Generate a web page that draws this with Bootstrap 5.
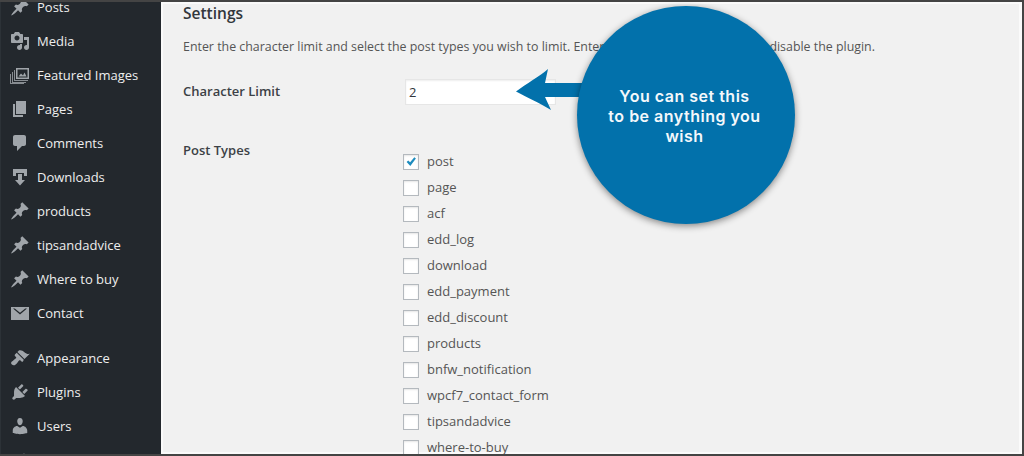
<!DOCTYPE html>
<html lang="en">
<head>
<meta charset="UTF-8">
<title>Settings</title>
<link href="https://cdn.jsdelivr.net/npm/bootstrap@5.3.0/dist/css/bootstrap.min.css" rel="stylesheet">
<style>
    html, body { height: 456px; overflow: hidden; background: #f1f1f1; }
    body { font-family: "Open Sans", "Noto Sans", sans-serif; font-size: 13px; color: #444; }
    .shot { height: 456px; overflow: hidden; border-top: 2px solid #444; border-right: 2px solid #444; border-bottom: 2px solid #444; }
    .side { width: 161px; flex: none; background: #23282d; margin-top: -12px; padding-bottom: 40px; border-left: 1px solid #2c3237; }
    .side-item { height: 34px; flex: none; padding-left: 9px; gap: 7px; color: #eee; font-size: 13px; line-height: 1; }
    .side-item svg { width: 20px; height: 20px; fill: #a0a5aa; flex: none; }
    .side-gap { height: 11px; flex: none; }
    .main-area { padding: 1px 0 0 22px; box-shadow: inset 2px 2px 0 #fafafa, inset -3px -2px 0 #fafafa; }
    .set-title { font-size: 15.5px; font-weight: 600; line-height: 20px; color: #32373c; margin: 0; }
    .set-desc { margin: 14px 0 0; line-height: 20px; font-size: 12.4px; color: #555; white-space: nowrap; }
    .field-label { width: 222px; flex: none; font-size: 13px; font-weight: 600; color: #3c4146; }
    .limit-row { margin-top: 22px; height: 26px; }
    .limit-input { width: 151px; height: 26px; border: 1px solid #e6e6e6; background: #fff; padding: 0 3px; color: #32373c; font-size: 13px; box-shadow: inset 0 1px 2px rgba(0,0,0,.07); }
    .types-row { margin-top: 36px; }
    .check-list { padding-top: 8px; margin-left: -2px; }
    .check-line { height: 26px; gap: 8px; color: #555; font-size: 13px; }
    .check-line .form-check-input { width: 16px; height: 16px; margin: 0; border: 1px solid #b4b9be; border-radius: 0; background-color: #fff; box-shadow: inset 0 1px 2px rgba(0,0,0,.1); }
    .check-line .form-check-input:checked { background-color: #fff; background-image: url("data:image/svg+xml,%3Csvg xmlns='http://www.w3.org/2000/svg' viewBox='0 0 16 16'%3E%3Cpath fill='%231e8cbe' d='M3 8l1.8-1.8L7 8.4 11.8 2.6 13.6 4 7.2 12.6z'/%3E%3C/svg%3E"); }
    .callout-dot { position: absolute; left: 577px; top: 4px; width: 218px; height: 218px; border-radius: 50%; background: #0271ab; box-shadow: 0 2px 7px rgba(0,0,0,.45); color: #f4f8fb; font-family: Inter, sans-serif; font-weight: 600; font-size: 16px; letter-spacing: .5px; line-height: 20px; text-align: center; padding: 80px 3px 0 0; }
    .callout-arrow { position: absolute; left: 510px; top: 62px; width: 80px; height: 52px; fill: #0271ab; }
</style>
</head>
<body>
<div class="shot d-flex position-relative">
    <div class="side d-flex flex-column">
        <div class="side-item d-flex align-items-center"><svg viewBox="0 0 20 20"><path d="M10.44 3.02l1.82-1.82 6.36 6.35-1.83 1.82c-1.05-.68-2.48-.57-3.41.36l-.75.75c-.92.93-1.04 2.35-.35 3.41l-1.83 1.82-2.41-2.41-2.8 2.79c-.42.42-3.38 2.71-3.8 2.29s1.86-3.39 2.28-3.81l2.79-2.79L4.1 9.36l1.83-1.82c1.05.69 2.48.57 3.4-.36l.75-.75c.93-.92 1.05-2.35.36-3.41z"/></svg>Posts</div>
        <div class="side-item d-flex align-items-center"><svg viewBox="0 0 20 20"><path d="M13 11V4c0-.55-.45-1-1-1h-1.67L9 1H5L3.67 3H2c-.55 0-1 .45-1 1v7c0 .55.45 1 1 1h10c.55 0 1-.45 1-1zM7 4.5c1.38 0 2.5 1.12 2.5 2.5S8.38 9.5 7 9.5 4.5 8.38 4.5 7 5.62 4.5 7 4.5zM14 6h5v10.5c0 1.38-1.12 2.5-2.5 2.5S14 17.88 14 16.5s1.12-2.5 2.5-2.5c.17 0 .34.02.5.05V9h-3V6zm-4 8.05V13h2v3.5c0 1.38-1.12 2.5-2.5 2.5S7 17.88 7 16.5 8.12 14 9.5 14c.17 0 .34.02.5.05z"/></svg>Media</div>
        <div class="side-item d-flex align-items-center"><svg viewBox="0 0 20 20"><path fill-rule="evenodd" d="M6 3h13v11H6zM7.500 4.500v8h10v-8zM8.500 11.500l2.500-3 2 2 1.500-3 2 4z"/><path d="M4 5h1v10h13v1H4zM2 7h1v10h13v1H2zM0 9h1v9h13v1H0z" opacity=".8"/></svg>Featured Images</div>
        <div class="side-item d-flex align-items-center"><svg viewBox="0 0 20 20"><path d="M6 15V2h10v13H6zm-1 1h8v2H3V5h2v11z"/></svg>Pages</div>
        <div class="side-item d-flex align-items-center"><svg viewBox="0 0 20 20"><path d="M5 2h9c1.1 0 2 .9 2 2v7c0 1.1-.9 2-2 2h-2l-5 5v-5H5c-1.1 0-2-.9-2-2V4c0-1.1.9-2 2-2z"/></svg>Comments</div>
        <div class="side-item d-flex align-items-center"><svg viewBox="0 0 20 20"><path d="M3 2h14v7h-3V6H6v3H3zM8 7h4v6h3l-5 5.500-5-5.500h3z"/></svg>Downloads</div>
        <div class="side-item d-flex align-items-center"><svg viewBox="0 0 20 20"><path d="M10.44 3.02l1.82-1.82 6.36 6.35-1.83 1.82c-1.05-.68-2.48-.57-3.41.36l-.75.75c-.92.93-1.04 2.35-.35 3.41l-1.83 1.82-2.41-2.41-2.8 2.79c-.42.42-3.38 2.71-3.8 2.29s1.86-3.39 2.28-3.81l2.79-2.79L4.1 9.36l1.83-1.82c1.05.69 2.48.57 3.4-.36l.75-.75c.93-.92 1.05-2.35.36-3.41z"/></svg>products</div>
        <div class="side-item d-flex align-items-center"><svg viewBox="0 0 20 20"><path d="M10.44 3.02l1.82-1.82 6.36 6.35-1.83 1.82c-1.05-.68-2.48-.57-3.41.36l-.75.75c-.92.93-1.04 2.35-.35 3.41l-1.83 1.82-2.41-2.41-2.8 2.79c-.42.42-3.38 2.71-3.8 2.29s1.86-3.39 2.28-3.81l2.79-2.79L4.1 9.36l1.83-1.82c1.05.69 2.48.57 3.4-.36l.75-.75c.93-.92 1.05-2.35.36-3.41z"/></svg>tipsandadvice</div>
        <div class="side-item d-flex align-items-center"><svg viewBox="0 0 20 20"><path d="M10.44 3.02l1.82-1.82 6.36 6.35-1.83 1.82c-1.05-.68-2.48-.57-3.41.36l-.75.75c-.92.93-1.04 2.35-.35 3.41l-1.83 1.82-2.41-2.41-2.8 2.79c-.42.42-3.38 2.71-3.8 2.29s1.86-3.39 2.28-3.81l2.79-2.79L4.1 9.36l1.83-1.82c1.05.69 2.48.57 3.4-.36l.75-.75c.93-.92 1.05-2.35.36-3.41z"/></svg>Where to buy</div>
        <div class="side-item d-flex align-items-center"><svg viewBox="0 0 20 20"><path fill-rule="evenodd" d="M1 4h18v13H1zM3 5.500l7 6 7-6h-1.800L10 9.800 4.800 5.500z"/></svg>Contact</div>
        <div class="side-gap"></div>
        <div class="side-item d-flex align-items-center"><svg viewBox="0 0 20 20"><path d="M14.48 11.06L7.41 3.99l1.5-1.5c.5-.56 2.3-.47 3.51.32 1.21.8 1.43 1.28 2.91 2.1 1.18.64 2.45 1.26 4.45.85zm-.71.71L6.7 4.7 4.93 6.47c-.39.39-.39 1.02 0 1.41l1.06 1.06c.39.39.39 1.03 0 1.42-.6.6-1.43 1.11-2.21 1.69-.35.26-.7.53-1.01.84C1.43 13.23.4 14.96 1.93 16.5s3.27.5 4.61-.84c.31-.31.58-.66.84-1.01.58-.78 1.09-1.61 1.69-2.21.39-.39 1.03-.39 1.42 0l1.06 1.06c.39.39 1.02.39 1.41 0z"/></svg>Appearance</div>
        <div class="side-item d-flex align-items-center"><svg viewBox="0 0 20 20"><path d="M13.11 4.36L9.87 7.6 8 5.73l3.24-3.24c.35-.34 1.05-.2 1.56.32.52.51.66 1.21.31 1.55zm-8 1.77l.91-1.12 9.01 9.01-1.19.84c-.71.71-2.63 1.16-3.82 1.16H6.14L4.9 17.26c-.59.59-1.54.59-2.12 0-.59-.58-.59-1.53 0-2.12l1.24-1.24v-3.88c0-1.13.4-3.19 1.09-3.89zm7.26 3.97l3.24-3.24c.34-.35 1.04-.21 1.55.31.52.51.66 1.21.31 1.55l-3.24 3.25z"/></svg>Plugins</div>
        <div class="side-item d-flex align-items-center"><svg viewBox="0 0 20 20"><path d="M10 9.25c-2.27 0-2.73-3.44-2.73-3.44C7 4.02 7.82 2 9.97 2c2.160 0 2.980 2.020 2.710 3.810 0 0-.41 3.440-2.680 3.440zm0 2.570L12.720 10c2.390 0 4.520 2.330 4.520 4.530v2.490s-3.650 1.130-7.240 1.130c-3.650 0-7.240-1.130-7.240-1.130v-2.490c0-2.250 1.940-4.480 4.470-4.480z"/></svg>Users</div>
        <div class="side-item d-flex align-items-center"><svg viewBox="0 0 20 20"><path d="M15 4l-3 3 1 2 2 1 3-3c.5 2-.5 5-4 5L6 19l-3-3 8-8c0-3 2-5 4-4z"/></svg></div>
    </div>
    <div class="main-area flex-grow-1">
        <h2 class="set-title">Settings</h2>
        <p class="set-desc">Enter the character limit and select the post types you wish to limit. Enter 0 or leave this field blank to disable the plugin.</p>
        <div class="limit-row d-flex align-items-center">
            <div class="field-label">Character Limit</div>
            <input class="limit-input" type="text" value="2">
        </div>
        <div class="types-row d-flex">
            <div class="field-label">Post Types</div>
            <div class="check-list">
                <div class="check-line d-flex align-items-center"><input class="form-check-input" type="checkbox" checked>post</div>
                <div class="check-line d-flex align-items-center"><input class="form-check-input" type="checkbox">page</div>
                <div class="check-line d-flex align-items-center"><input class="form-check-input" type="checkbox">acf</div>
                <div class="check-line d-flex align-items-center"><input class="form-check-input" type="checkbox">edd_log</div>
                <div class="check-line d-flex align-items-center"><input class="form-check-input" type="checkbox">download</div>
                <div class="check-line d-flex align-items-center"><input class="form-check-input" type="checkbox">edd_payment</div>
                <div class="check-line d-flex align-items-center"><input class="form-check-input" type="checkbox">edd_discount</div>
                <div class="check-line d-flex align-items-center"><input class="form-check-input" type="checkbox">products</div>
                <div class="check-line d-flex align-items-center"><input class="form-check-input" type="checkbox">bnfw_notification</div>
                <div class="check-line d-flex align-items-center"><input class="form-check-input" type="checkbox">wpcf7_contact_form</div>
                <div class="check-line d-flex align-items-center"><input class="form-check-input" type="checkbox">tipsandadvice</div>
                <div class="check-line d-flex align-items-center"><input class="form-check-input" type="checkbox">where-to-buy</div>
            </div>
        </div>
    </div>
    <svg class="callout-arrow" viewBox="0 0 80 52"><path d="M6 27.500C16 20 30 12 38 5L35 19H80V33H35L41 46C30 39 16 33 6 27.500z"/></svg>
    <div class="callout-dot">You can set this<br>to be anything you<br>wish</div>
</div>
<script src="https://cdn.jsdelivr.net/npm/bootstrap@5.3.0/dist/js/bootstrap.bundle.min.js"></script>
</body>
</html>
